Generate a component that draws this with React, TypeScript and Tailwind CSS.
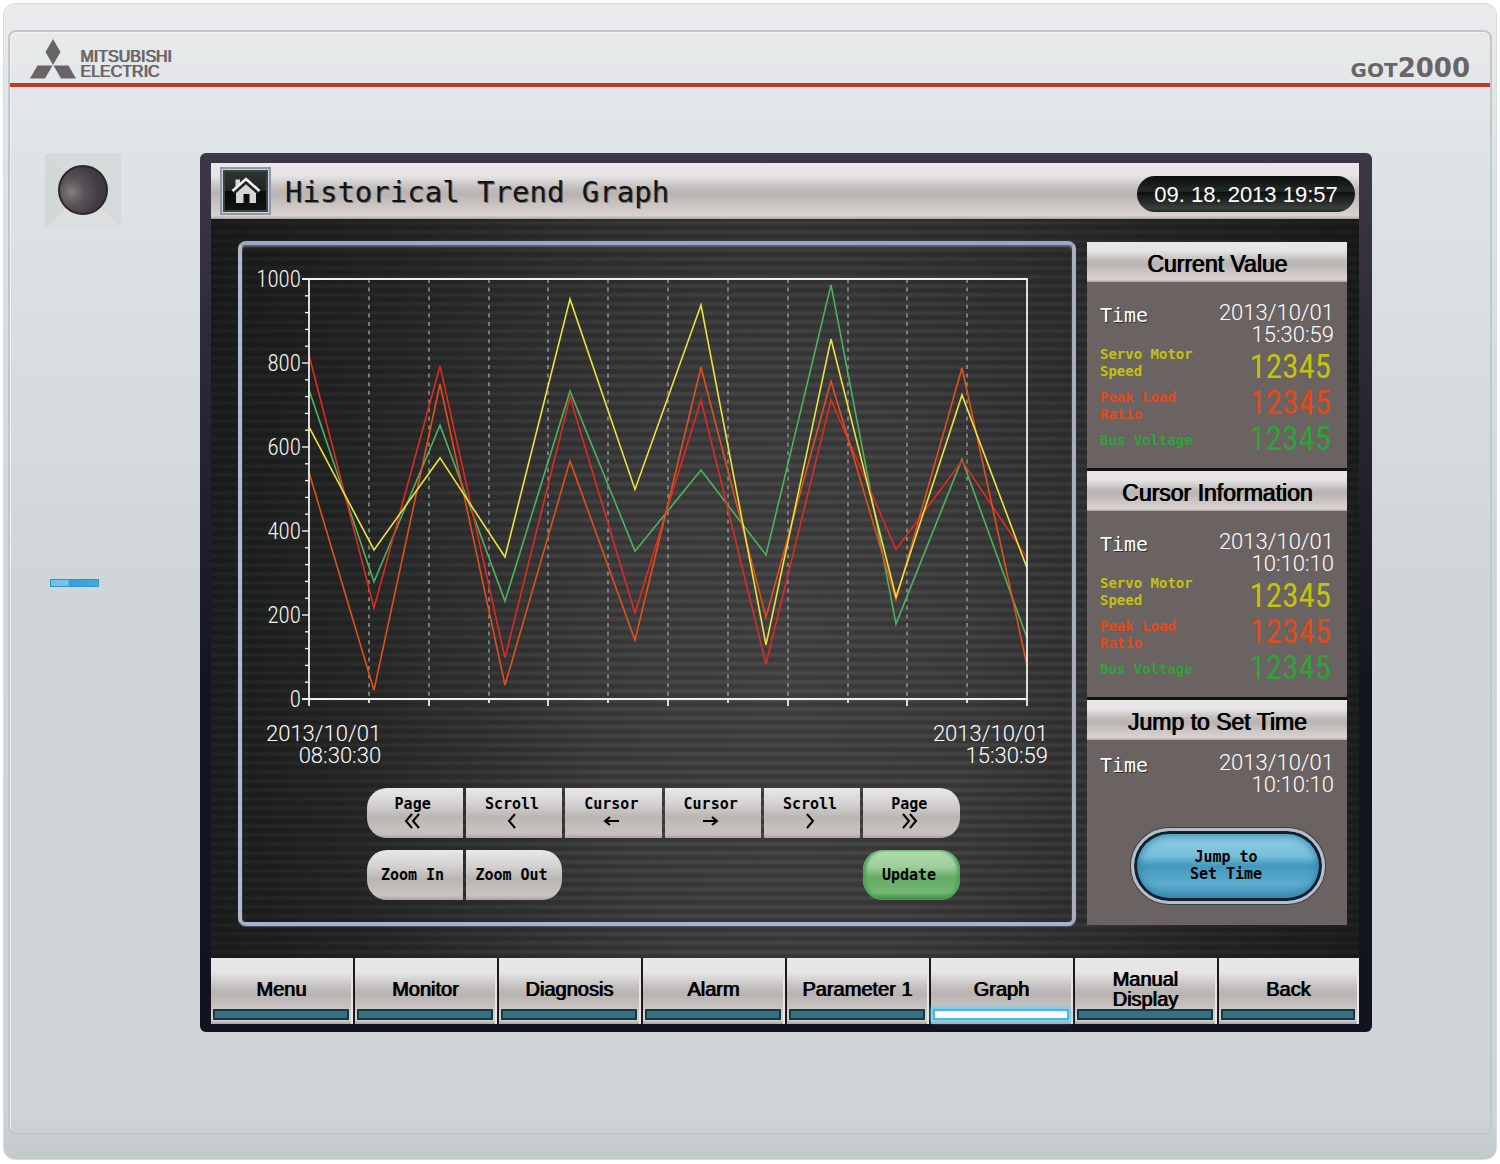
import React from "react";

const CHROME =
  "bg-[linear-gradient(to_bottom,#e9e7e7_0%,#e6e4e5_22%,#c0bcbb_46%,#b9b4b2_56%,#cfc8c7_80%,#d8d2d1_94%,#aaa3a0_100%)]";
const STRIPES =
  "bg-[repeating-linear-gradient(to_bottom,rgba(0,0,0,0.24)_0px,rgba(0,0,0,0.24)_3px,rgba(0,0,0,0.04)_5px,rgba(0,0,0,0.04)_7px,rgba(0,0,0,0.24)_9px),radial-gradient(ellipse_55%_120%_at_50%_60%,#4e4e4e_0%,#454645_30%,#2b2d2c_70%,#1d1f1e_100%)]";

const PLOT = { left: 309, right: 1027, top: 279, bottom: 699 };
const DIVISIONS = 12;

const SERIES = [
  { name: "Bus Voltage", color: "#50b060", values: [736, 279, 652, 233, 733, 352, 545, 343, 986, 179, 571, 145] },
  { name: "Spindle Load", color: "#e02a22", values: [819, 217, 793, 98, 719, 205, 712, 83, 712, 356, 567, 336] },
  { name: "Peak Load Ratio", color: "#e0501e", values: [540, 21, 750, 33, 567, 140, 790, 195, 757, 236, 788, 81] },
  { name: "Servo Motor Speed", color: "#ece23a", values: [648, 355, 574, 338, 952, 499, 938, 129, 857, 243, 724, 312] },
];

const xAt = (i: number, count: number) =>
  Math.round(PLOT.left + ((PLOT.right - PLOT.left) * i) / count);
const yAt = (v: number) => PLOT.bottom - ((PLOT.bottom - PLOT.top) * v) / 1000;

function TrendChart() {
  return (
    <svg viewBox="242 245 830 474" className="block h-auto w-full" role="img" aria-label="Trend chart">
      {Array.from({ length: DIVISIONS - 1 }, (_, i) => (
        <line
          key={i}
          x1={xAt(i + 1, DIVISIONS)}
          x2={xAt(i + 1, DIVISIONS)}
          y1={PLOT.top}
          y2={PLOT.bottom}
          stroke="#9c9c9c"
          strokeWidth="1.4"
          strokeDasharray="4 4.6"
        />
      ))}
      {SERIES.map((s) => (
        <polyline
          key={s.name}
          fill="none"
          stroke={s.color}
          strokeWidth="1.6"
          points={s.values.map((v, i) => `${xAt(i, 11)},${yAt(v)}`).join(" ")}
        />
      ))}
      <path
        d={`M302 ${PLOT.top}H${PLOT.right}V706M${PLOT.left} ${PLOT.top}V706M302 ${PLOT.bottom}H${PLOT.right}`}
        fill="none"
        stroke="#efefeb"
        strokeWidth="1.8"
      />
      {Array.from({ length: DIVISIONS - 1 }, (_, i) => (
        <line
          key={i}
          x1={xAt(i + 1, DIVISIONS)}
          x2={xAt(i + 1, DIVISIONS)}
          y1={PLOT.bottom}
          y2={i % 2 === 1 ? 706 : 703}
          stroke="#efefeb"
          strokeWidth="1.8"
        />
      ))}
      {Array.from({ length: 26 }, (_, i) => (
        <line
          key={i}
          x1={i % 5 === 0 ? 302 : 305}
          x2={PLOT.left}
          y1={yAt(i * 40)}
          y2={yAt(i * 40)}
          stroke="#efefeb"
          strokeWidth="1.4"
        />
      ))}
      {[0, 200, 400, 600, 800, 1000].map((v) => (
        <text
          key={v}
          x="301"
          y={yAt(v) + 8}
          textAnchor="end"
          fill="#f4f4f2"
          className="font-['Roboto_Condensed','Roboto',sans-serif] text-[23px] font-light"
        >
          {v}
        </text>
      ))}
    </svg>
  );
}

function Stamp({ date, time }: { date: string; time: string }) {
  return (
    <div className="text-right font-['Roboto',sans-serif] text-[22px] leading-[22px] font-light text-white">
      <div>{date}</div>
      <div>{time}</div>
    </div>
  );
}

const KEY_TEXT = "font-['DejaVu_Sans_Mono',monospace] text-[15px] leading-[17px] font-bold text-black";

const GLYPHS: Record<string, string> = {
  first: "M9 1L3 8L9 15M16 1L10 8L16 15",
  prev: "M13 1L7 8L13 15",
  left: "M18 8H4M9 4L4 8L9 12",
  right: "M2 8H16M11 4L16 8L11 12",
  next: "M7 1L13 8L7 15",
  last: "M4 1L10 8L4 15M11 1L17 8L11 15",
};

const NAV_KEYS = [
  { label: "Page", glyph: "first" },
  { label: "Scroll", glyph: "prev" },
  { label: "Cursor", glyph: "left" },
  { label: "Cursor", glyph: "right" },
  { label: "Scroll", glyph: "next" },
  { label: "Page", glyph: "last" },
];

const KEY_FACE =
  "h-[50px] bg-[linear-gradient(to_bottom,#e9e7e8_0%,#d6d3d4_30%,#b9b6b2_58%,#c6bfbf_80%,#c9c0c0_92%,#a8a3a2_100%)]";

function ChartPanel() {
  return (
    <section className="flex flex-1 flex-col rounded-lg border-4 border-t-[#9aa7c2] border-r-[#a9aebb] border-b-[#a9b1ce] border-l-[#b0bacd] shadow-[inset_0_2px_2px_#5c6779,0_1px_1px_#4c5465]">
      <TrendChart />
      <div className="flex justify-between px-6 pt-1">
        <Stamp date="2013/10/01" time="08:30:30" />
        <Stamp date="2013/10/01" time="15:30:59" />
      </div>
      <div className="mt-[21px] ml-3 flex w-[593px] flex-col gap-3 self-center">
        <div className="grid grid-cols-6 gap-[3px] overflow-hidden rounded-[20px]">
          {NAV_KEYS.map((k, i) => (
            <button key={i} className={`${KEY_FACE} ${KEY_TEXT} flex flex-col items-center pt-2 pr-1`}>
              {k.label}
              <svg viewBox="0 0 20 16" className="h-4 w-5" fill="none" stroke="#000" strokeWidth="2" aria-hidden="true">
                <path d={GLYPHS[k.glyph]} />
              </svg>
            </button>
          ))}
        </div>
        <div className="flex justify-between">
          <div className="grid w-[195px] grid-cols-2 gap-[3px] overflow-hidden rounded-[20px]">
            <button className={`${KEY_FACE} ${KEY_TEXT} pr-1`}>Zoom In</button>
            <button className={`${KEY_FACE} ${KEY_TEXT} pr-1`}>Zoom Out</button>
          </div>
          <button
            className={`${KEY_TEXT} h-[50px] w-[97px] rounded-[20px] bg-[linear-gradient(to_bottom,#b4dcae_0%,#9cce98_35%,#65ab65_55%,#72b872_85%,#35883c_100%)] pr-1 shadow-[inset_3px_0_3px_#4ea355,inset_-3px_0_3px_#4ea355]`}
          >
            Update
          </button>
        </div>
      </div>
    </section>
  );
}

const HEAD_TEXT = "font-['Liberation_Sans',sans-serif] text-black [text-shadow:1px_0_#000]";

function SidePanel({ title, children }: { title: string; children: React.ReactNode }) {
  return (
    <section className="bg-[#6a6361]">
      <h2 className={`${CHROME} ${HEAD_TEXT} flex h-10 items-center justify-center pt-1 text-[23px]`}>{title}</h2>
      {children}
    </section>
  );
}

function TimeRow({ date, time }: { date: string; time: string }) {
  return (
    <div className="flex justify-between">
      <span className="font-['DejaVu_Sans_Mono',monospace] text-[20px] leading-[26px] text-white [text-shadow:1px_1px_#2b3030]">
        Time
      </span>
      <Stamp date={date} time={time} />
    </div>
  );
}

const READINGS = [
  { lines: ["Servo Motor", "Speed"], value: "12345", color: "text-[#c3c20e]" },
  { lines: ["Peak Load", "Ratio"], value: "12345", color: "text-[#e24a1c]" },
  { lines: ["Bus Voltage"], value: "12345", color: "text-[#2fa23a]" },
];

function Readings() {
  return (
    <div className="flex h-[109px] justify-between pr-[3px]">
      <div className="flex flex-col gap-[9px] font-['DejaVu_Sans_Mono',monospace] text-[14px] leading-[17px] font-bold">
        {READINGS.map((r) => (
          <div key={r.lines[0]} className={r.color}>
            {r.lines.map((l) => (
              <div key={l}>{l}</div>
            ))}
          </div>
        ))}
      </div>
      <div className="flex flex-col pt-[3px] font-['Roboto_Condensed','Roboto',sans-serif] text-[33px] leading-[36px]">
        {READINGS.map((r) => (
          <span key={r.lines[0]} className={r.color}>
            {r.value}
          </span>
        ))}
      </div>
    </div>
  );
}

function ValuesPanel({ title, time }: { title: string; time: string }) {
  return (
    <SidePanel title={title}>
      <div className="px-[13px] pt-5 pb-[13px]">
        <TimeRow date="2013/10/01" time={time} />
        <Readings />
      </div>
    </SidePanel>
  );
}

const TABS = ["Menu", "Monitor", "Diagnosis", "Alarm", "Parameter 1", "Graph", "Manual Display", "Back"];

function Screen() {
  return (
    <div className="flex-1 rounded-md bg-[linear-gradient(to_bottom,#3e3846_0%,#2a2836_25%,#15151f_60%,#121320_100%)] pt-[10px] pr-[13px] pb-2 pl-[11px]">
      <div className={`${STRIPES} flex flex-col`}>
        <header className={`${CHROME} flex h-14 items-center pr-1 pl-[9px]`}>
          <button
            aria-label="Home"
            className="flex h-12 w-[51px] items-center justify-center border-2 border-[#8e98ab] bg-[linear-gradient(to_bottom,#2f3432_0%,#222725_50%,#080b0a_51%,#121514_100%)] shadow-[inset_0_0_0_1px_#d0d2d6,inset_0_0_0_3px_#3c4442]"
          >
            <svg viewBox="0 0 30 28" className="h-7 w-[30px]" aria-hidden="true">
              <path d="M4.500 2.500h4.500v5l-4.500 4z" fill="#d9d9d9" />
              <path d="M5 15L15 6L25 15V26H18.500V17H12.500V26H5Z" fill="#d6d6d6" />
              <path d="M2 15.500L15 4L28 15.500" fill="none" stroke="#222" strokeWidth="5" />
              <path d="M1.500 14L15 2L28.500 14" fill="none" stroke="#f2f2f2" strokeWidth="2.600" />
            </svg>
          </button>
          <h1 className="ml-[14px] pt-1 font-['DejaVu_Sans_Mono',monospace] text-[29px] text-[#151515] [text-shadow:1px_1px_#77726f]">
            Historical Trend Graph
          </h1>
          <time className="mt-[6px] ml-auto flex h-9 w-[218px] items-center justify-center rounded-full bg-[linear-gradient(to_bottom,#0b0e0c_0%,#242a27_42%,#0d100e_46%,#3a403d_90%,#222_100%)] pt-px font-['Liberation_Sans',sans-serif] text-[22px] text-white">
            09. 18. 2013 19:57
          </time>
        </header>

        <main className="flex gap-[11px] pt-[22px] pr-3 pb-8 pl-[27px]">
          <ChartPanel />
          <aside className="my-px flex w-[260px] flex-col gap-[3px] bg-[#101312]">
            <ValuesPanel title="Current Value" time="15:30:59" />
            <ValuesPanel title="Cursor Information" time="10:10:10" />
            <SidePanel title="Jump to Set Time">
              <div className="px-[13px] pt-3 pb-[21px]">
                <TimeRow date="2013/10/01" time="10:10:10" />
                <button
                  className={`${KEY_TEXT} mt-8 mr-[9px] ml-auto flex h-[76px] w-[194px] items-center justify-center rounded-full border-[3px] border-[#b9bdc9] bg-[linear-gradient(to_bottom,#8fd0e4_0%,#79c0da_35%,#4398bd_50%,#5cacce_75%,#3c8db4_100%)] pr-1 shadow-[inset_0_0_0_3px_#10202c,inset_0_0_8px_4px_#2f7fa6,0_0_0_1px_#3b3b45]`}
                >
                  Jump to
                  <br />
                  Set Time
                </button>
              </div>
            </SidePanel>
          </aside>
        </main>

        <nav className="grid grid-cols-[repeat(7,142fr)_140fr] gap-[2px] bg-[#1a1c1b]">
          {TABS.map((t) => {
            const active = t === "Graph";
            return (
              <button
                key={t}
                aria-current={active ? "page" : undefined}
                className={`${CHROME} ${HEAD_TEXT} flex h-[66px] flex-col border-r-2 border-[#e8e6e6] px-[2px] pb-1 text-[20px] leading-5`}
              >
                <span className="flex flex-1 items-center justify-center self-center pt-[11px]">
                  <span className={t === "Manual Display" ? "w-20" : ""}>{t}</span>
                </span>
                <span
                  className={
                    active
                      ? "block h-[11px] w-full border-2 border-[#3fbbe6] bg-white shadow-[0_0_4px_2px_#6fcdee]"
                      : "block h-[11px] w-full border-2 border-[#123a44] bg-[#38707f]"
                  }
                />
              </button>
            );
          })}
        </nav>
      </div>
    </div>
  );
}

export default function App() {
  return (
    <div className="min-h-screen bg-white p-[3px]">
      <div className="rounded-xl border border-[#d9dcdd] bg-[linear-gradient(to_bottom,#eaebec_0%,#dfe4e6_12%,#d0d6d7_50%,#cfd5d7_96%,#c3c9cb_100%)] px-1 pt-[26px] pb-6">
        <div className="rounded-lg border-2 border-[#c3c7ca] pb-[101px] shadow-[inset_1px_1px_#eef0f1]">
          <div className="flex h-[51px] items-end justify-between px-5">
            <div className="flex items-end gap-1 pb-1">
              <svg viewBox="0 0 46 40" className="h-10 w-[46px]" fill="#6a6468" aria-label="Mitsubishi logo">
                <path d="M23 0L30.500 13L23 26L15.500 13ZM7.500 26.500H22.500L15 39.500H0ZM23.500 26.500H38.500L46 39.500H31Z" />
              </svg>
              <div className="font-['Liberation_Sans',sans-serif] text-[16px] leading-[15px] text-[#6a6468] [text-shadow:1px_0_#6a6468]">
                MITSUBISHI
                <br />
                ELECTRIC
              </div>
            </div>
            <div className="flex items-baseline pb-[3px] font-['DejaVu_Sans',sans-serif] text-[20px] leading-5 font-bold text-[#6a6468]">
              GOT<span className="text-[26px]">2000</span>
            </div>
          </div>
          <div className="h-1 bg-[#c5372a]" />
          <div className="flex items-start pt-[66px] pr-[118px]">
            <div className="w-[190px] shrink-0 pl-[35px]">
              <div className="flex h-[75px] w-[76px] items-center justify-center rounded bg-[conic-gradient(from_45deg,#d6dadb_0deg_90deg,#dbdfdf_90deg_180deg,#d2d7d8_180deg_270deg,#d7dbdb_270deg_360deg)]">
                <div className="mb-[2px] size-[50px] rounded-full border-2 border-[#2c272b] bg-[radial-gradient(circle_at_25%_55%,#847e83_0%,#5a5459_30%,#423c42_65%,#37323a_100%)]" />
              </div>
              <div className="mt-[351px] ml-[5px] h-2 w-[49px] border border-[#2f95c8] bg-[linear-gradient(to_right,#6dbfe6_0%,#7cc5e8_35%,#2f9fd6_40%,#4aabdc_100%)]" />
            </div>
            <Screen />
          </div>
        </div>
      </div>
    </div>
  );
}
